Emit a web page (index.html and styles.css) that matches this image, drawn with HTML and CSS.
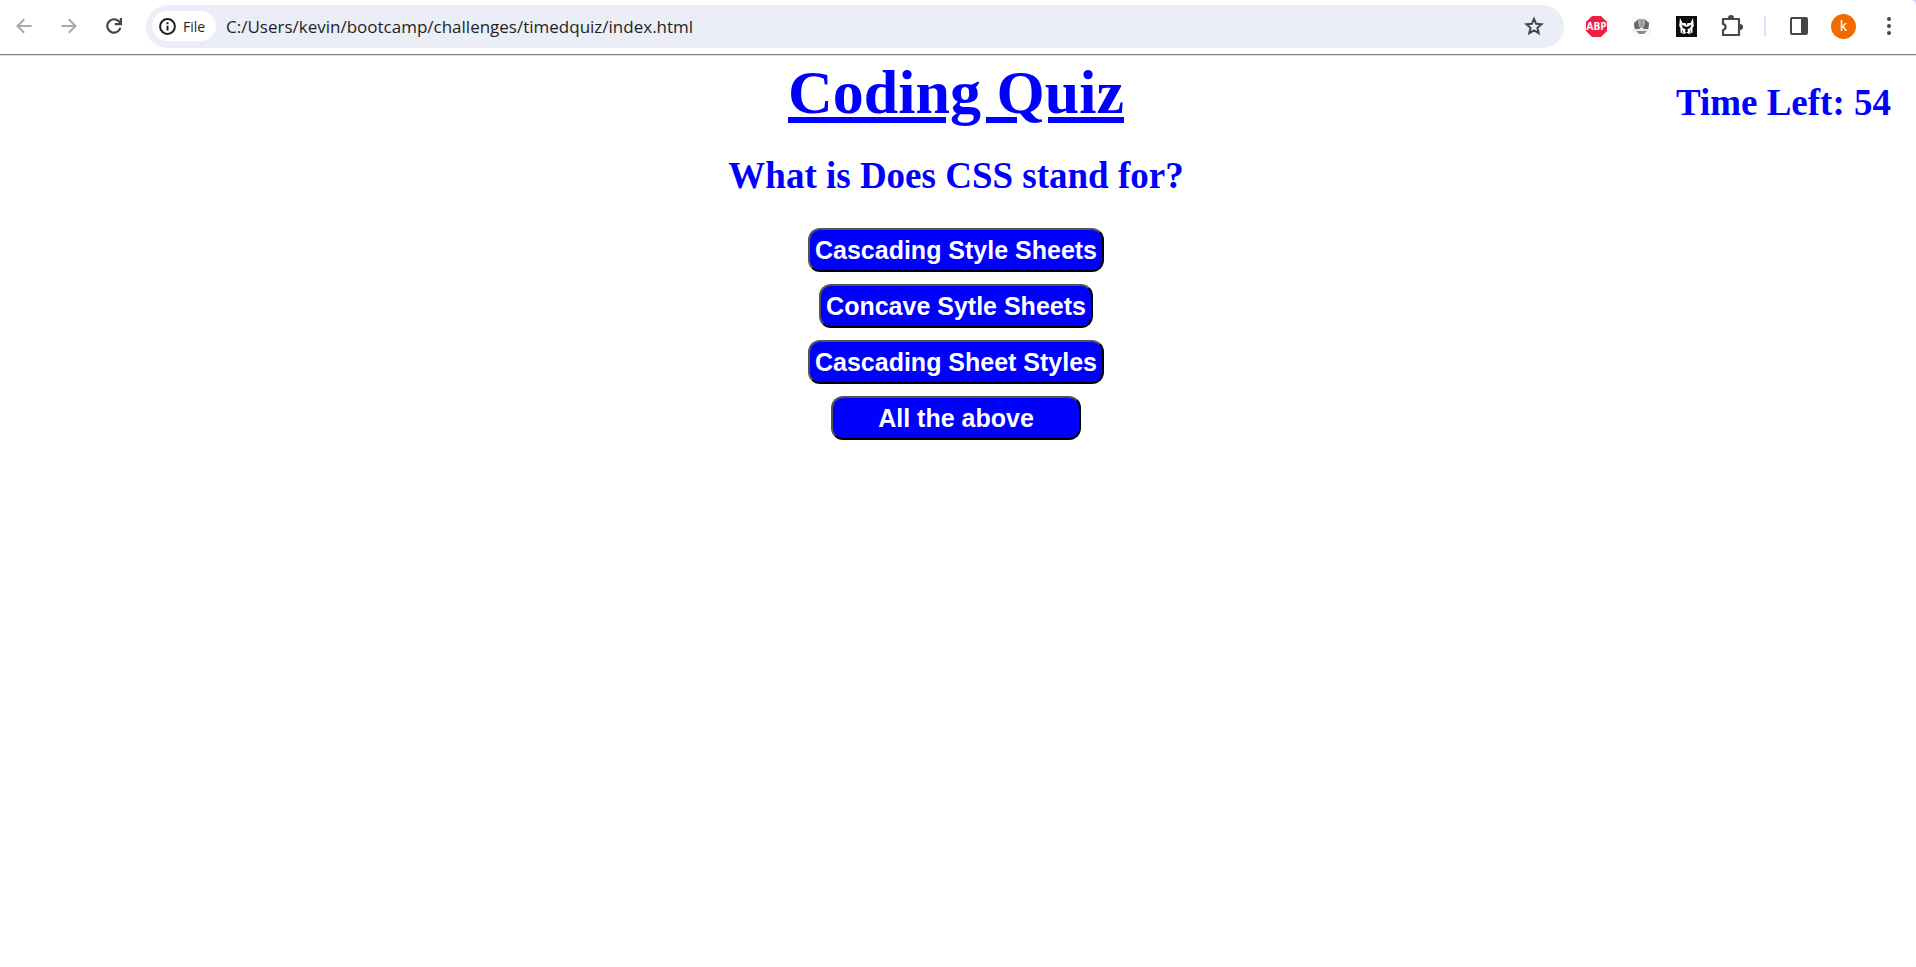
FILE: index.html
```html
<!DOCTYPE html>
<html lang="en">
<head>
<meta charset="utf-8">
<title>Coding Quiz</title>
<link rel="stylesheet" href="styles.css">
</head>
<body>
<div class="browser">
  <header class="toolbar">
    <button class="tool tool-off" type="button" aria-label="Back">
      <svg width="16" height="16" viewBox="0 0 16 16" fill="none" stroke="currentColor" stroke-width="2"><path d="M15.500 8H2M8.200 1.200L1.500 8l6.700 6.800"/></svg>
    </button>
    <button class="tool tool-off" type="button" aria-label="Forward">
      <svg width="16" height="16" viewBox="0 0 16 16" fill="none" stroke="currentColor" stroke-width="2"><path d="M.500 8H14M7.800 1.200L14.500 8l-6.700 6.800"/></svg>
    </button>
    <button class="tool" type="button" aria-label="Reload">
      <svg width="16" height="16" viewBox="0 0 16 16" fill="none" stroke="currentColor" stroke-width="2.200"><path d="M14.400 9.800A6.700 6.700 0 1 1 12.800 3.300L14 4.700"/><path d="M14.900 0v6.100H8.800"/></svg>
    </button>
    <div class="address">
      <button class="chip" type="button">
        <svg width="17" height="17" viewBox="0 0 17 17" fill="none" stroke="currentColor" stroke-width="2"><circle cx="8.500" cy="8.500" r="7.400"/><path d="M8.500 7.700v4.800M8.500 4.200v2"/></svg>
        File
      </button>
      <input class="url" type="text" aria-label="Address" value="C:/Users/kevin/bootcamp/challenges/timedquiz/index.html">
      <button class="star" type="button" aria-label="Bookmark this page">
        <svg width="20" height="20" viewBox="0 0 20 20" fill="none" stroke="currentColor" stroke-width="2"><path d="M10 2.800l2.100 5 5.400.5-4.100 3.500 1.300 5.300L10 14.300l-4.700 2.800 1.300-5.300-4.100-3.500 5.400-.5z"/></svg>
      </button>
    </div>
    <div class="extensions">
      <button class="tool" type="button" aria-label="Adblock Plus">
        <svg width="21" height="21" viewBox="0 0 21 21"><path fill="#f01d45" d="M6 0h9l6 6v9l-6 6H6l-6-6V6z"/><text class="abp" x="10.500" y="14" text-anchor="middle">ABP</text></svg>
      </button>
      <button class="tool" type="button" aria-label="Helmet extension">
        <svg width="19" height="19" viewBox="0 0 19 19"><path fill="#fafafa" d="M0 0h19v19H0z"/><path fill="#a8a8a8" d="M2 11V6l4-4h7l4 4v5z"/><path fill="#686868" d="M2 6l4-3v4l2 5H3zM17 6l-4-3v4l-2 5h5z"/><path fill="#8a8a8a" d="M9 3h1v7H9z"/><path fill="#e9e9e9" d="M0 12h19l-1 2H1z"/><path fill="#8c8c8c" d="M4 14h11l-3 3H7z"/></svg>
      </button>
      <button class="tool" type="button" aria-label="Mask extension">
        <svg width="21" height="21" viewBox="0 0 21 21"><path fill="#0d0d0d" d="M0 0h21v21H0z"/><path fill="#fff" d="M4 2l2.500 5h8L17 2l.8 8-1.300 2v4.500L13 18l-2.500-1.500L8 18l-3.500-1.500V12l-1.300-2z"/><path fill="#0d0d0d" d="M5.500 8.500l4 2.200h2l4-2.200-1.500 3.800-2.500.7.500 2.500-1.500 1-1.500-1 .5-2.500-2.500-.7zM6.300 13l1 4-1-.5zM14.700 13l-1 4 1-.5zM9.500 7h2l-1 2.500z"/></svg>
      </button>
      <button class="tool" type="button" aria-label="Extensions">
        <svg width="22" height="22" viewBox="0 0 22 22"><path fill="none" stroke="currentColor" stroke-width="2.200" stroke-linejoin="round" d="M2 4h16v16H2v-5c3.500-1 3.500-5 0-6z"/><path fill="currentColor" d="M7 3a3 3 0 0 1 6 0zM19 9a3 3 0 0 1 0 6z"/></svg>
      </button>
      <span class="divider"></span>
      <button class="tool" type="button" aria-label="Side panel">
        <svg width="18" height="18" viewBox="0 0 18 18"><rect x="1" y="1" width="16" height="16" rx="1" fill="none" stroke="currentColor" stroke-width="2"/><path fill="currentColor" d="M11 1h6v16h-6z"/></svg>
      </button>
      <button class="tool" type="button" aria-label="Profile"><span class="avatar">k</span></button>
      <button class="tool" type="button" aria-label="Menu">
        <svg width="4" height="18" viewBox="0 0 4 18" fill="currentColor"><circle cx="2" cy="2" r="2"/><circle cx="2" cy="9" r="2"/><circle cx="2" cy="16" r="2"/></svg>
      </button>
    </div>
  </header>
</div>
<main class="quiz">
  <div class="heading">
    <h1 class="title">Coding Quiz</h1>
    <p class="timer">Time Left: 54</p>
  </div>
  <h2 class="question">What is Does CSS stand for?</h2>
  <div class="answers">
    <button class="answer" type="button">Cascading Style Sheets</button>
    <button class="answer" type="button">Concave Sytle Sheets</button>
    <button class="answer" type="button">Cascading Sheet Styles</button>
    <button class="answer" type="button">All the above</button>
  </div>
</main>
</body>
</html>
```
FILE: styles.css
```css
* { box-sizing: border-box; }

body {
  margin: 0;
  background: #fff;
  font-family: "Liberation Serif", "Times New Roman", serif;
}

.browser {
  background: #c5d7f8;
  border-bottom: 1px solid #dcdcdc;
}

.toolbar {
  display: flex;
  align-items: center;
  height: 55px;
  padding: 0 5px 2px 1px;
  background: #fff;
  border-bottom: 1px solid #808080;
  border-top-right-radius: 5px;
  font-family: "Open Sans", "Segoe UI", sans-serif;
}

.tool,
.chip,
.star {
  display: flex;
  align-items: center;
  justify-content: center;
  padding: 0;
  border: 0;
  background: none;
  color: #474747;
  font-family: inherit;
}

.tool {
  flex: none;
  width: 45px;
  height: 43px;
}

.tool-off { color: #a9a9a9; }

.address {
  display: flex;
  flex: 1;
  align-items: center;
  height: 43px;
  margin: 0 10px;
  padding: 0 20px 0 6px;
  border-radius: 22px;
  background: #ebeef7;
}

.chip {
  justify-content: flex-start;
  gap: 7px;
  width: 64px;
  height: 30px;
  padding-left: 7px;
  border-radius: 15px;
  background: #fff;
  color: #1f1f1f;
  font-size: 14px;
}

.url {
  flex: 1;
  min-width: 0;
  padding: 0 0 0 10px;
  border: 0;
  outline: 0;
  background: none;
  color: #1f1f1f;
  font-family: inherit;
  font-size: 17px;
}

.extensions {
  display: flex;
  align-items: center;
}

.abp {
  fill: #fff;
  font-family: "Open Sans", sans-serif;
  font-size: 10px;
  font-weight: 700;
}

.divider {
  width: 2px;
  height: 20px;
  margin: 0 10px;
  background: #d3e3fd;
}

.avatar {
  width: 25px;
  height: 25px;
  border-radius: 50%;
  background: #ef6c00;
  color: #fff;
  font-family: Roboto, sans-serif;
  font-size: 14px;
  line-height: 25px;
}

.quiz {
  padding: 1px 4px 0 0;
  color: #00f;
}

.heading {
  display: grid;
  grid-template-columns: 1fr auto 1fr;
}

.title {
  grid-column: 2;
  margin: 0;
  font-size: 62px;
  line-height: 70px;
  text-decoration: underline 6px;
  text-underline-offset: 4px;
}

.timer {
  justify-self: end;
  margin: 25px 21px 0 0;
  font-size: 37px;
  font-weight: 700;
  line-height: 42px;
}

.question {
  margin: 28px 0 31px;
  font-size: 37px;
  line-height: 42px;
  text-align: center;
}

.answers {
  display: flex;
  flex-direction: column;
  align-items: center;
  gap: 12px;
}

.answer {
  min-width: 250px;
  height: 44px;
  padding: 0 5px;
  border: 2px outset #000;
  border-radius: 12px;
  background: #00f;
  color: #fff;
  font-family: "Liberation Sans", Arial, sans-serif;
  font-size: 25px;
  font-weight: 700;
}
```
